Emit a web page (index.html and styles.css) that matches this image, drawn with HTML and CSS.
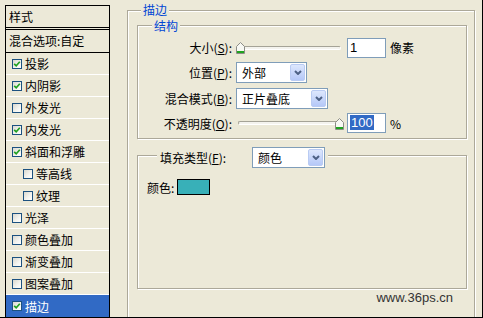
FILE: index.html
```html
<!DOCTYPE html>
<html lang="zh-CN">
<head>
<meta charset="utf-8">
<title>图层样式 - 描边</title>
<link rel="stylesheet" href="styles.css">
</head>
<body>
<div class="app">
  <div class="sidebar">
    <div class="side-head">样式</div>
    <div class="side-blend">混合选项:自定</div>
    <div class="side-item"><span class="cb"><svg viewBox="0 0 8 8" width="8" height="8"><polyline points="1.2,3.8 3.2,5.8 6.8,1.8" /></svg></span>投影</div>
    <div class="side-item"><span class="cb"><svg viewBox="0 0 8 8" width="8" height="8"><polyline points="1.2,3.8 3.2,5.8 6.8,1.8" /></svg></span>内阴影</div>
    <div class="side-item"><span class="cb"></span>外发光</div>
    <div class="side-item"><span class="cb"><svg viewBox="0 0 8 8" width="8" height="8"><polyline points="1.2,3.8 3.2,5.8 6.8,1.8" /></svg></span>内发光</div>
    <div class="side-item"><span class="cb"><svg viewBox="0 0 8 8" width="8" height="8"><polyline points="1.2,3.8 3.2,5.8 6.8,1.8" /></svg></span>斜面和浮雕</div>
    <div class="side-item sub"><span class="cb"></span>等高线</div>
    <div class="side-item sub"><span class="cb"></span>纹理</div>
    <div class="side-item"><span class="cb"></span>光泽</div>
    <div class="side-item"><span class="cb"></span>颜色叠加</div>
    <div class="side-item"><span class="cb"></span>渐变叠加</div>
    <div class="side-item"><span class="cb"></span>图案叠加</div>
    <div class="side-item selected"><span class="cb"><svg viewBox="0 0 8 8" width="8" height="8"><polyline points="1.2,3.8 3.2,5.8 6.8,1.8" /></svg></span>描边</div>
  </div>

  <div class="grp outer">
    <div class="legend outer-legend">描边</div>

    <div class="grp struct">
      <div class="legend struct-legend">结构</div>
      <div class="form">
        <div class="lbl">大小(<u>S</u>):</div>
        <div class="ctl">
          <div class="slider"><div class="track"></div><svg class="thumb" style="left:0px" viewBox="0 0 9 12" width="9" height="12"><path class="thumb-body" d="M0.5 11.5 V4.5 L4.5 0.5 L8.5 4.5 V11.5 Z"/><rect class="thumb-green" x="1" y="9" width="7" height="2"/></svg></div>
          <div class="num">1</div>
          <span class="unit">像素</span>
        </div>

        <div class="lbl">位置(<u>P</u>):</div>
        <div class="ctl">
          <div class="combo w71"><span class="combo-text">外部</span><span class="combo-btn"><svg viewBox="0 0 8 5" width="8" height="5"><polyline points="1,1 4,4 7,1"/></svg></span></div>
        </div>

        <div class="lbl">混合模式(<u>B</u>):</div>
        <div class="ctl">
          <div class="combo w92"><span class="combo-text">正片叠底</span><span class="combo-btn"><svg viewBox="0 0 8 5" width="8" height="5"><polyline points="1,1 4,4 7,1"/></svg></span></div>
        </div>

        <div class="lbl">不透明度(<u>O</u>):</div>
        <div class="ctl">
          <div class="slider"><div class="track"></div><svg class="thumb" style="left:99px" viewBox="0 0 9 12" width="9" height="12"><path class="thumb-body" d="M0.5 11.5 V4.5 L4.5 0.5 L8.5 4.5 V11.5 Z"/><rect class="thumb-green" x="1" y="9" width="7" height="2"/></svg></div>
          <div class="num"><span class="sel">100</span></div>
          <span class="unit">%</span>
        </div>
      </div>
    </div>

    <div class="grp fill">
      <div class="legend fill-legend">
        <span class="fill-label">填充类型(<u>F</u>):</span>
        <div class="combo w73"><span class="combo-text">颜色</span><span class="combo-btn"><svg viewBox="0 0 8 5" width="8" height="5"><polyline points="1,1 4,4 7,1"/></svg></span></div>
      </div>
      <div class="color-row"><span>颜色:</span><span class="swatch"></span></div>
    </div>

    <div class="watermark">www.36ps.cn</div>
  </div>
</div>
</body>
</html>
```

FILE: styles.css
```css
html, body {
  margin: 0;
  padding: 0;
  background: #ece9d8;
}

body {
  font-family: "Noto Sans CJK SC", "Noto Sans", sans-serif;
  font-size: 12px;
  color: #000;
}

.app {
  display: flex;
  align-items: stretch;
  width: 483px;
  height: 318px;
  box-sizing: border-box;
  padding: 5px 0 0 5px;
  border-right: 1px solid #000;
  border-bottom: 1px solid #000;
  overflow: hidden;
  background: #ece9d8;
}

/* ---------- sidebar ---------- */
.sidebar {
  width: 105px;
  box-sizing: border-box;
  border: 1px solid #000;
  border-bottom: 0;
  display: flex;
  flex-direction: column;
  flex: none;
}

.side-head {
  height: 21px;
  line-height: 21px;
  padding-left: 3px;
  border-bottom: 3px double #000;
}

.side-blend {
  height: 22px;
  line-height: 22px;
  padding-left: 3px;
  border-bottom: 1px solid #000;
}

.side-item {
  height: 21px;
  display: flex;
  align-items: center;
  gap: 3px;
  padding-left: 6px;
  border-bottom: 1px solid #fff;
  line-height: 21px;
  white-space: nowrap;
}

.side-item.sub {
  padding-left: 17px;
}

.side-item.selected {
  height: 22px;
  border-bottom: 0;
  background: #316ac5;
  color: #fff;
}

.cb {
  width: 10px;
  height: 10px;
  box-sizing: border-box;
  border: 1px solid #1c5180;
  background: linear-gradient(135deg, #d9d8cf 0%, #f4f4f0 60%, #fff 100%);
  display: flex;
  align-items: center;
  justify-content: center;
  flex: none;
}

.cb svg polyline {
  fill: none;
  stroke: #21a121;
  stroke-width: 1.7;
}

/* ---------- group boxes ---------- */
.grp {
  box-sizing: border-box;
  border: 1px solid #aca899;
  box-shadow: inset 1px 1px 0 #fff, 1px 1px 0 #fff;
}

.outer {
  margin: 5px 0 0 17px;
  width: 348px;
  border-bottom: 0;
  flex: none;
}

.legend {
  width: fit-content;
  background: #ece9d8;
  color: #0046d5;
  height: 14px;
  line-height: 14px;
  padding: 0 2px;
  white-space: nowrap;
}

.outer-legend {
  margin: -8px 0 0 13px;
}

.struct {
  margin: 8px 0 0 9px;
  width: 330px;
  height: 114px;
}

.struct-legend {
  margin: -7px 0 0 14px;
}

.form {
  margin-top: 4px;
  display: grid;
  grid-template-columns: 94px auto;
  grid-auto-rows: 21px;
  column-gap: 4px;
  row-gap: 4.33px;
  align-items: center;
}

.lbl {
  text-align: right;
  white-space: nowrap;
  line-height: 21px;
}

.ctl {
  display: flex;
  align-items: center;
  gap: 4px;
  height: 21px;
}

.slider {
  position: relative;
  width: 107px;
  height: 21px;
  display: flex;
  align-items: center;
}

.track {
  margin-left: 2px;
  width: 103px;
  height: 4px;
  box-sizing: border-box;
  border: 1px solid #a5a397;
  border-right-color: #fff;
  border-bottom-color: #fff;
  border-radius: 2px;
  background: #f4f3ee;
}

.thumb {
  position: absolute;
  top: 5px;
}

.thumb-body {
  fill: #f7f8f3;
  stroke: #8c8c86;
  stroke-width: 1;
}

.thumb-green {
  fill: #1fa31f;
}

.num {
  width: 39px;
  height: 20px;
  box-sizing: border-box;
  border: 1px solid #7f9db9;
  background: #fff;
  padding-left: 2px;
  line-height: 18px;
  font-family: "Liberation Sans", Arial, sans-serif;
  font-size: 13px;
}

.num .sel {
  background: #316ac5;
  color: #fff;
  padding: 0 1px;
}

.unit {
  line-height: 21px;
}

.combo {
  display: flex;
  align-items: center;
  height: 21px;
  box-sizing: border-box;
  border: 1px solid #7f9db9;
  background: #fff;
  padding-left: 5px;
}

.w71 { width: 71px; }
.w92 { width: 92px; }
.w73 { width: 73px; }

.combo-text {
  flex: 1;
  color: #000;
  line-height: 19px;
}

.combo-btn {
  width: 15px;
  height: 17px;
  margin: 1px;
  box-sizing: border-box;
  border: 1px solid #b9cbf3;
  border-radius: 2px;
  background: linear-gradient(#dde7fd, #b5c8f8);
  display: flex;
  align-items: center;
  justify-content: center;
}

.combo-btn polyline {
  fill: none;
  stroke: #4d6185;
  stroke-width: 2;
}

.fill {
  margin: 16px 0 0 9px;
  width: 330px;
  height: 134px;
}

.fill-legend {
  margin: -9px 0 0 19px;
  height: 21px;
  padding: 0 3px;
  display: flex;
  align-items: center;
  color: #000;
}

.fill-label {
  width: 92px;
  line-height: 21px;
}

.color-row {
  margin: 11px 0 0 9px;
  display: flex;
  align-items: center;
  gap: 3px;
  height: 16px;
}

.swatch {
  width: 33px;
  height: 16px;
  box-sizing: border-box;
  border: 1px solid #000;
  background: #38b0b8;
}

.watermark {
  margin-top: 1px;
  padding-right: 21px;
  text-align: right;
  font-family: "Liberation Sans", Arial, sans-serif;
  font-size: 13px;
  line-height: 15px;
  color: #333;
}
```
